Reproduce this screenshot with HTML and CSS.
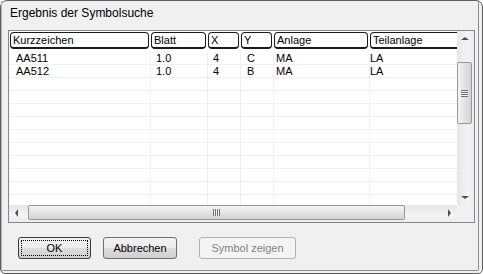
FILE: index.html
```html
<!DOCTYPE html>
<html lang="de">
<head>
  <meta charset="UTF-8" />
  <title>Ergebnis der Symbolsuche</title>
  <link rel="stylesheet" href="styles.css">
</head>
<body>
  <div class="dialog">
    <div class="client">
      <div class="title">Ergebnis der Symbolsuche</div>

      <div class="list">
        <div class="view">
          <div class="head">
            <div class="hcell c1">Kurzzeichen</div>
            <div class="hcell c2">Blatt</div>
            <div class="hcell c3">X</div>
            <div class="hcell c4">Y</div>
            <div class="hcell c5">Anlage</div>
            <div class="hcell c6">Teilanlage</div>
          </div>
          <div class="rows" id="rows"></div>
        </div>

        <div class="vscroll">
          <span class="arrow up"></span>
          <div class="vthumb"><span class="vgrip"></span></div>
          <span class="arrow down"></span>
        </div>

        <div class="hscroll">
          <span class="arrow left"></span>
          <div class="hthumb"><span class="hgrip"></span></div>
          <span class="arrow right"></span>
        </div>

        <div class="corner"></div>
      </div>

      <div class="buttons">
        <button class="btn default"><span class="focus">OK</span></button>
        <button class="btn">Abbrechen</button>
        <button class="btn wide" disabled>Symbol zeigen</button>
      </div>
    </div>
  </div>

  <script>
    const results = [
      ["AA511", "1.0", "4", "C", "MA", "LA"],
      ["AA512", "1.0", "4", "B", "MA", "LA"]
    ];

    const rows = document.getElementById("rows");

    // fill up to 12 lines, the empty ones only show the grid
    for (let i = 0; i < 12; i++) {
      const row = document.createElement("div");
      row.className = "row";
      const data = results[i] || ["", "", "", "", "", ""];
      data.forEach((value, col) => {
        const cell = document.createElement("div");
        cell.className = "cell c" + (col + 1);
        cell.textContent = value;
        row.appendChild(cell);
      });
      rows.appendChild(row);
    }
  </script>
</body>
</html>
```

FILE: styles.css
```css
body {
  margin: 0;
  background-color: #fff;
  font-family: "Liberation Sans", Arial, sans-serif;
  font-size: 11px;
  color: #000;
}

.dialog {
  width: 483px;
  height: 274px;
  box-sizing: border-box;
  border: 1px solid #5f5f5f;
  border-radius: 7px 7px 5px 5px;
  background-color: #f0f0f0;
  padding: 0 3px 2px 0;
}

.client {
  height: 100%;
  box-sizing: border-box;
  border-right: 1px solid #8c8c8c;
  border-bottom: 1px solid #8c8c8c;
  border-left: 1px solid #b4b4b4;
  border-radius: 0 0 2px 2px;
}

.title {
  height: 29px;
  box-sizing: border-box;
  padding: 4px 0 0 8px;
  font-size: 12px;
  line-height: 16px;
}

.list {
  margin-left: 6px;
  width: 467px;
  height: 193px;
  box-sizing: border-box;
  border: 1px solid #828790;
  background-color: #fff;
  display: grid;
  grid-template-columns: 1fr 17px;
  grid-template-rows: 1fr 17px;
}

.view {
  overflow: hidden;
}

.head {
  display: flex;
  height: 21px;
  padding-top: 1px;
  box-sizing: border-box;
}

.hcell {
  flex: none;
  height: 17px;
  box-sizing: border-box;
  margin-right: 2px;
  padding-left: 2px;
  border: 1px solid #1a1a1a;
  border-bottom-width: 2px;
  border-radius: 4px;
  line-height: 14px;
  white-space: nowrap;
  overflow: hidden;
}

.head .c1 { width: 139px; margin-left: 1px; }
.head .c2 { width: 55px; }
.head .c3 { width: 31px; }
.head .c4 { width: 31px; }
.head .c5 { width: 94px; }
.head .c6 { width: 100px; }

.row {
  display: flex;
  height: 13px;
  box-sizing: border-box;
  border-bottom: 1px solid #f0f0f0;
}

.cell {
  flex: none;
  box-sizing: border-box;
  border-right: 1px solid #f0f0f0;
  line-height: 12px;
  white-space: nowrap;
}

.row .c1 { width: 142px; padding-left: 7px; }
.row .c2 { width: 57px; padding-left: 5px; }
.row .c3 { width: 33px; padding-left: 5px; }
.row .c4 { width: 33px; padding-left: 6px; }
.row .c5 { width: 96px; padding-left: 2px; }
.row .c6 { width: 100px; padding-left: 0; }

.vscroll {
  position: relative;
  background: linear-gradient(to right, #e6e6e6, #f4f4f4 60%, #ececec);
}

.hscroll {
  position: relative;
  background: linear-gradient(to bottom, #e6e6e6, #f4f4f4 60%, #ececec);
}

.corner {
  background-color: #f0f0f0;
}

.arrow {
  position: absolute;
  width: 0;
  height: 0;
  border: 4px solid transparent;
}

.arrow.up {
  left: 4px;
  top: 6px;
  border-bottom: 3px solid #505050;
  border-top: none;
}

.arrow.down {
  left: 4px;
  bottom: 6px;
  border-top: 3px solid #505050;
  border-bottom: none;
}

.arrow.left {
  left: 6px;
  top: 4px;
  border-right: 3px solid #505050;
  border-left: none;
}

.arrow.right {
  right: 6px;
  top: 4px;
  border-left: 3px solid #505050;
  border-right: none;
}

.vthumb {
  position: absolute;
  left: 0;
  top: 31px;
  width: 15px;
  height: 62px;
  box-sizing: border-box;
  border: 1px solid #979797;
  border-radius: 2px;
  background: linear-gradient(to right, #f4f4f4, #e3e3e3 50%, #d3d3d3);
  display: flex;
  align-items: center;
  justify-content: center;
}

.vgrip {
  width: 7px;
  height: 7px;
  background: repeating-linear-gradient(to bottom, #6f6f6f 0 1px, #f0f0f0 1px 2px);
}

.hthumb {
  position: absolute;
  top: 0;
  left: 19px;
  width: 377px;
  height: 15px;
  box-sizing: border-box;
  border: 1px solid #979797;
  border-radius: 2px;
  background: linear-gradient(to bottom, #f4f4f4, #e3e3e3 50%, #d3d3d3);
  display: flex;
  align-items: center;
  justify-content: center;
}

.hgrip {
  width: 7px;
  height: 7px;
  background: repeating-linear-gradient(to right, #6f6f6f 0 1px, #f0f0f0 1px 2px);
}

.buttons {
  display: flex;
  gap: 12px;
  margin: 14px 0 0 16px;
}

.btn {
  width: 73px;
  height: 22px;
  box-sizing: border-box;
  padding: 0;
  border: 1px solid #707070;
  border-radius: 3px;
  background: linear-gradient(to bottom, #f2f2f2, #ebebeb 50%, #dddddd 51%, #cfcfcf);
  font-family: "Liberation Sans", Arial, sans-serif;
  font-size: 11px;
  color: #000;
}

.btn.default {
  border-color: #3c3c3c;
  padding: 2px;
}

.btn .focus {
  display: flex;
  align-items: center;
  justify-content: center;
  height: 100%;
  border: 1px dotted #000;
  box-sizing: border-box;
}

.btn + .btn {
  width: 74px;
}

.btn.wide {
  width: 97px;
  margin-left: 10px;
  border-color: #adb2b5;
  background: #f4f4f4;
  color: #838383;
}
```
